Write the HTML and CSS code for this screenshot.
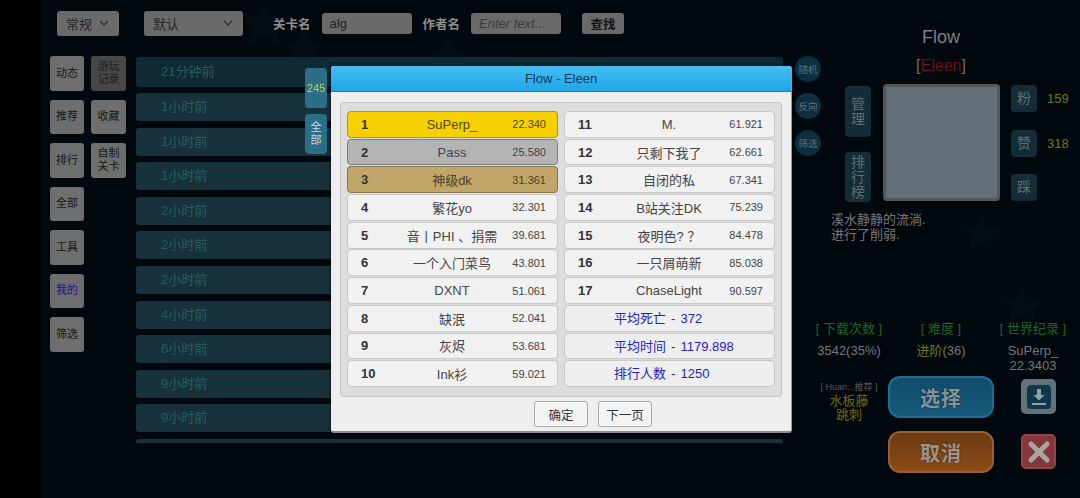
FILE: index.html
```html
<!DOCTYPE html>
<html lang="zh-CN">
<head>
    <meta charset="UTF-8">
    <title>Flow - Eleen</title>
    <link rel="stylesheet" href="styles.css">
</head>
<body>
<div class="side-band"></div>
<div class="stage">
    <svg class="stars" width="1038" height="498" viewBox="0 0 1038 498">
        <polygon points="222,4 228,18 244,18 232,28 236,42 222,34 208,42 212,28 200,18 216,18"/>
        <polygon points="262,32 267,43 280,43 270,51 273,62 262,56 251,62 254,51 244,43 257,43"/>
        <polygon points="405,40 410,51 422,52 413,59 416,70 405,64 394,70 397,59 388,52 400,51"/>
        <polygon points="935,228 940,216 945,228 957,229 948,237 951,248 940,242 929,248 932,237 923,229"/>
        <polygon points="975,300 980,290 986,300 998,302 989,309 992,320 980,314 969,320 972,309 963,302"/>
    </svg>

    <div class="main">
        <div class="topbar">
            <div class="select select-short"><span>常规</span>
                <svg width="12" height="8" viewBox="0 0 12 8"><path d="M2 2l4 4 4-4"/></svg>
            </div>
            <div class="select select-long"><span>默认</span>
                <svg width="12" height="8" viewBox="0 0 12 8"><path d="M2 2l4 4 4-4"/></svg>
            </div>
            <label class="field-label label-level">关卡名</label>
            <div class="field">alg</div>
            <label class="field-label label-author">作者名</label>
            <div class="field field-empty">Enter text...</div>
            <button class="search">查找</button>
        </div>

        <div class="content">
            <div class="nav">
                <button class="nav-btn">动态</button>
                <button class="nav-btn nav-dim">游玩<br>记录</button>
                <button class="nav-btn">推荐</button>
                <button class="nav-btn">收藏</button>
                <button class="nav-btn">排行</button>
                <button class="nav-btn">自制<br>关卡</button>
                <button class="nav-btn nav-first">全部</button>
                <button class="nav-btn nav-first">工具</button>
                <button class="nav-btn nav-first nav-active">我的</button>
                <button class="nav-btn nav-first">筛选</button>
            </div>

            <div class="list">
                <div class="list-row list-row-top">21分钟前</div>
                <div class="list-row">1小时前</div>
                <div class="list-row">1小时前</div>
                <div class="list-row">1小时前</div>
                <div class="list-row">2小时前</div>
                <div class="list-row">2小时前</div>
                <div class="list-row">2小时前</div>
                <div class="list-row">4小时前</div>
                <div class="list-row">6小时前</div>
                <div class="list-row">9小时前</div>
                <div class="list-row">9小时前</div>
                <div class="list-row"></div>
            </div>

            <div class="rounds">
                <button class="round">随机</button>
                <button class="round">反向</button>
                <button class="round">筛选</button>
            </div>
        </div>
    </div>

    <div class="detail">
        <div class="title">Flow</div>
        <div class="author">[<span class="author-name">Eleen</span>]</div>

        <div class="preview-row">
            <div class="tall-btns">
                <button class="panel-btn tall-two">管<br>理</button>
                <button class="panel-btn tall-three">排<br>行<br>榜</button>
            </div>
            <div class="preview"></div>
            <div class="counts">
                <div class="count"><button class="panel-btn square">粉</button><span class="count-num">159</span></div>
                <div class="count"><button class="panel-btn square">赞</button><span class="count-num">318</span></div>
                <div class="count"><button class="panel-btn square">踩</button></div>
            </div>
        </div>

        <p class="desc">溪水静静的流淌.<br>进行了削弱.</p>

        <div class="stats">
            <div class="stat">
                <div class="stat-head">[ 下载次数 ]</div>
                <div class="stat-value">3542(35%)</div>
            </div>
            <div class="stat">
                <div class="stat-head">[ 难度 ]</div>
                <div class="stat-value"><span class="level-name">进阶</span>(36)</div>
            </div>
            <div class="stat">
                <div class="stat-head">[ 世界纪录 ]</div>
                <div class="stat-value">SuPerp_<br>22.3403</div>
            </div>
        </div>

        <div class="actions">
            <div class="recommend">
                <div class="recommend-head">[ Huan...推荐 ]</div>
                <div class="recommend-tags">水板藤<br>跳刺</div>
            </div>
            <div class="big-btns">
                <button class="big-btn big-blue">选择</button>
                <button class="big-btn big-orange">取消</button>
            </div>
            <div class="icon-btns">
                <div class="icon-btn icon-download">
                    <svg width="24" height="24" viewBox="0 0 24 24">
                        <rect x="0" y="0" width="24" height="24" rx="4" fill="#10374a"/>
                        <path d="M10 4h4v6h3.5L12 15.5 6.500 10H10z" fill="#8fa0a6"/>
                        <rect x="5" y="18" width="14" height="2" fill="#8fa0a6"/>
                    </svg>
                </div>
                <div class="icon-btn icon-close">
                    <svg width="24" height="24" viewBox="0 0 24 24">
                        <path d="M4 4l16 16M20 4L4 20" stroke="#a8a4a0" stroke-width="5" stroke-linecap="round"/>
                    </svg>
                </div>
            </div>
        </div>
    </div>

    <div class="tabs">
        <div class="tab tab-count">245</div>
        <div class="tab">全<br>部</div>
    </div>

    <div class="modal">
        <div class="modal-head">Flow - Eleen</div>
        <div class="modal-body">
            <div class="board">
                <div class="rank rank-gold"><b>1</b><span>SuPerp_</span><i>22.340</i></div>
                <div class="rank rank-silver"><b>2</b><span>Pass</span><i>25.580</i></div>
                <div class="rank rank-bronze"><b>3</b><span>神级dk</span><i>31.361</i></div>
                <div class="rank"><b>4</b><span>繁花yo</span><i>32.301</i></div>
                <div class="rank"><b>5</b><span>音丨PHI 、捐需</span><i>39.681</i></div>
                <div class="rank"><b>6</b><span>一个入门菜鸟</span><i>43.801</i></div>
                <div class="rank"><b>7</b><span>DXNT</span><i>51.061</i></div>
                <div class="rank"><b>8</b><span>缺泯</span><i>52.041</i></div>
                <div class="rank"><b>9</b><span>灰烬</span><i>53.681</i></div>
                <div class="rank"><b>10</b><span>Ink衫</span><i>59.021</i></div>
                <div class="rank"><b>11</b><span>M.</span><i>61.921</i></div>
                <div class="rank"><b>12</b><span>只剩下我了</span><i>62.661</i></div>
                <div class="rank"><b>13</b><span>自闭的私</span><i>67.341</i></div>
                <div class="rank"><b>14</b><span>B站关注DK</span><i>75.239</i></div>
                <div class="rank"><b>15</b><span>夜明色? ？</span><i>84.478</i></div>
                <div class="rank"><b>16</b><span>一只屑萌新</span><i>85.038</i></div>
                <div class="rank"><b>17</b><span>ChaseLight</span><i>90.597</i></div>
                <div class="rank rank-sum">平均死亡 - 372</div>
                <div class="rank rank-sum">平均时间 - 1179.898</div>
                <div class="rank rank-sum">排行人数 - 1250</div>
            </div>
            <div class="modal-foot">
                <button class="modal-btn">确定</button>
                <button class="modal-btn">下一页</button>
            </div>
        </div>
    </div>
</div>
</body>
</html>
```

FILE: styles.css
```css
* {
    box-sizing: border-box;
}

html, body {
    height: 100%;
}

body {
    margin: 0;
    display: flex;
    overflow: hidden;
    background-color: #000;
    font-family: "Liberation Sans", "Noto Sans CJK SC", sans-serif;
}

button {
    padding: 0;
    border: none;
    font-family: inherit;
}

.side-band {
    width: 42px;
    background-color: #000;
}

.stage {
    position: relative;
    flex: 1;
    display: flex;
    background-color: #01080e;
}

.stars {
    position: absolute;
    top: 0;
    left: 0;
}

.stars polygon {
    fill: #040d14;
    stroke: #040d14;
    stroke-width: 3;
    stroke-linejoin: round;
}

.main {
    position: relative;
    width: 788px;
}

/* top bar */
.topbar {
    display: flex;
    align-items: center;
    height: 46px;
    padding-left: 15px;
}

.select {
    display: flex;
    align-items: center;
    justify-content: space-between;
    height: 25px;
    padding: 0 9px 0 9px;
    border-radius: 3px;
    background-color: #6a6a6a;
    color: #262626;
    font-size: 13px;
}

.select svg path {
    fill: none;
    stroke: #2a2a2a;
    stroke-width: 1.2;
}

.select-short {
    width: 62px;
}

.select-long {
    width: 99px;
    margin-left: 25px;
}

.field-label {
    color: #8f8f8f;
    font-size: 12.500px;
    font-weight: bold;
}

.label-level {
    margin-left: 30px;
}

.label-author {
    margin-left: 11px;
}

.field {
    width: 90px;
    height: 21px;
    margin-left: 11px;
    padding-left: 8px;
    border-radius: 3px;
    background-color: #6a6a6a;
    color: #222;
    font-size: 13px;
    line-height: 21px;
}

.field-empty {
    color: #3b3b3b;
    font-style: italic;
}

.search {
    width: 42px;
    height: 21px;
    margin-left: 21px;
    border-radius: 3px;
    background-color: #6a6a6a;
    color: #111;
    font-size: 12.500px;
    font-weight: bold;
}

/* list area */
.content {
    display: flex;
    align-items: flex-start;
    padding: 10px 0 0 8px;
}

.nav {
    display: grid;
    grid-template-columns: 34px 35px;
    grid-auto-rows: 34.500px;
    column-gap: 7px;
    row-gap: 9px;
    width: 86px;
}

.nav-btn {
    border-radius: 3px;
    background-color: #6e6e6e;
    color: #171717;
    font-size: 11px;
    line-height: 13px;
}

.nav-first {
    grid-column: 1;
}

.nav-dim {
    background-color: #474747;
    color: #222;
}

.nav-active {
    color: #1c1288;
}

.list {
    width: 647px;
    height: 386px;
    margin-top: 1px;
    overflow: hidden;
}

.list-row {
    height: 28px;
    margin-bottom: 6.600px;
    padding-left: 25px;
    border-radius: 3px;
    background-color: #17323c;
    color: #275c62;
    font-size: 13px;
    line-height: 28px;
}

.list-row-top {
    height: 30px;
    margin-bottom: 6px;
    background-color: #0f2a34;
    line-height: 30px;
}

.rounds {
    display: flex;
    flex-direction: column;
    gap: 11px;
    margin-left: 12px;
}

.round {
    width: 26px;
    height: 26px;
    border-radius: 50%;
    background-color: #0c2f41;
    color: #5f7078;
    font-size: 9.500px;
}

/* level detail on the right */
.detail {
    position: relative;
    flex: 1;
    padding-top: 26px;
    color: #8a8a8a;
}

.title {
    margin-left: -28px;
    text-align: center;
    font-size: 18px;
    line-height: 22px;
    color: #7f7f7f;
}

.author {
    margin-top: 9px;
    margin-left: -28px;
    text-align: center;
    font-size: 16px;
    line-height: 18px;
    color: #6f6f6f;
}

.author-name {
    color: #6e0e1e;
}

.preview-row {
    display: flex;
    margin-top: 9px;
    margin-left: 15px;
}

.tall-btns {
    display: flex;
    flex-direction: column;
    justify-content: space-between;
    width: 26px;
    height: 116px;
    margin-top: 2px;
}

.panel-btn {
    border-radius: 4px;
    background-color: #132d38;
    color: #5f6f75;
    font-size: 14px;
    line-height: 15px;
}

.tall-two {
    height: 51px;
}

.tall-three {
    height: 50px;
}

.preview {
    width: 117px;
    height: 117px;
    margin-left: 12px;
    border: 3px solid #565656;
    border-radius: 4px;
    background-color: #626e78;
}

.counts {
    display: flex;
    flex-direction: column;
    justify-content: space-between;
    height: 116px;
    margin-left: 11px;
    margin-top: 1px;
}

.count {
    display: flex;
    align-items: center;
    gap: 10px;
}

.square {
    width: 26px;
    height: 27px;
}

.count-num {
    color: #747416;
    font-size: 13px;
}

.desc {
    margin: 11px 0 0 1px;
    color: #787878;
    font-size: 13px;
    line-height: 14.500px;
}

.stats {
    display: grid;
    grid-template-columns: repeat(3, 92px);
    margin-top: 80px;
    margin-left: -27px;
    text-align: center;
}

.stat-head {
    color: #1f642a;
    font-size: 13px;
    line-height: 14px;
}

.stat-value {
    margin-top: 8px;
    color: #767676;
    font-size: 13px;
    line-height: 14.500px;
}

.level-name {
    color: #747416;
}

.actions {
    display: flex;
    margin-top: 3px;
}

.recommend {
    width: 78px;
    margin-left: -20px;
    margin-top: 6px;
    text-align: center;
    white-space: nowrap;
}

.recommend-head {
    color: #585858;
    font-size: 9px;
    line-height: 11px;
}

.recommend-tags {
    margin-top: 1px;
    color: #6b6b12;
    font-size: 13px;
    line-height: 14px;
}

.big-btns {
    display: flex;
    flex-direction: column;
    gap: 13px;
}

.big-btn {
    width: 106px;
    height: 42px;
    border-width: 2px;
    border-style: solid;
    border-radius: 12px;
    color: #84929a;
    font-size: 20px;
    font-weight: bold;
    letter-spacing: 1px;
    text-shadow: 0 0 2px #0b2430;
}

.big-blue {
    border-color: #1f6f92;
    background: linear-gradient(#114c6a, #175a7c);
}

.big-orange {
    border-color: #96603a;
    background: linear-gradient(#6c3a12, #8e4c15);
    color: #9a948c;
    text-shadow: 0 0 2px #45240a;
}

.icon-btns {
    display: flex;
    flex-direction: column;
    gap: 20px;
    margin: 3px 0 0 27px;
}

.icon-btn {
    display: flex;
    align-items: center;
    justify-content: center;
    width: 35px;
    height: 35px;
    border-radius: 5px;
}

.icon-download {
    background-color: #62727a;
}

.icon-close {
    border: 2px solid #96454a;
    background-color: #84363a;
}

/* leaderboard popup */
.tabs {
    position: absolute;
    top: 68px;
    left: 263px;
    display: flex;
    flex-direction: column;
    gap: 6px;
}

.tab {
    display: flex;
    align-items: center;
    justify-content: center;
    width: 22px;
    height: 40px;
    border-radius: 4px;
    background-color: #2b6e87;
    color: #c8d4d8;
    font-size: 11.500px;
    line-height: 13px;
    text-align: center;
}

.tab-count {
    color: #b9d83a;
    font-size: 11px;
}

.modal {
    position: absolute;
    top: 66px;
    left: 289px;
    width: 461px;
    height: 367px;
    border-right: 1px solid #9a9a9a;
    border-bottom: 2px solid #8d8d8d;
    border-radius: 3px;
    background-color: #eeeeee;
    box-shadow: 0 0 4px rgba(0, 0, 0, 0.6);
}

.modal-head {
    height: 26px;
    border-bottom: 1px solid #1b7fb6;
    border-radius: 3px 3px 0 0;
    background: linear-gradient(#45bdf2, #1fa6e6);
    color: #0c3a5c;
    font-size: 13px;
    line-height: 25px;
    text-align: center;
}

.modal-body {
    padding: 10px 9px 0 9px;
}

.board {
    display: grid;
    grid-template-rows: repeat(10, 26.800px);
    grid-template-columns: 211px 211px;
    grid-auto-flow: column;
    column-gap: 6px;
    row-gap: 0.900px;
    width: 442px;
    height: 295px;
    padding: 8px 0 0 6px;
    border: 1px solid #c6c6c6;
    border-radius: 3px;
    background-color: #dddddd;
}

.rank {
    display: grid;
    grid-template-columns: 1fr auto 1fr;
    align-items: center;
    padding: 0 11px 0 13px;
    border: 1px solid #c8c8c8;
    border-radius: 4px;
    background-color: #f1f1f1;
    color: #444;
    font-size: 13px;
}

.rank span {
    margin-right: 3px;
}

.rank b {
    color: #333;
    font-size: 13px;
}

.rank i {
    justify-self: end;
    font-size: 11px;
    font-style: normal;
}

.rank-gold {
    border-color: #a9912c;
    background-color: #f7d000;
    color: #54460c;
}

.rank-silver {
    border-color: #808080;
    background-color: #b4b4b4;
}

.rank-bronze {
    border-color: #857349;
    background-color: #c0a668;
    color: #4d4026;
}

.rank-sum {
    display: block;
    padding: 0 0 0 49px;
    background-color: #eeeeee;
    color: #2323c4;
    line-height: 25px;
    word-spacing: 1.500px;
}

.modal-foot {
    display: flex;
    gap: 10px;
    margin-top: 4px;
    padding-left: 194px;
}

.modal-btn {
    width: 54px;
    height: 26px;
    border: 1px solid #ababab;
    border-radius: 3px;
    background-color: #f3f3f3;
    color: #333;
    font-size: 12.500px;
}
```
